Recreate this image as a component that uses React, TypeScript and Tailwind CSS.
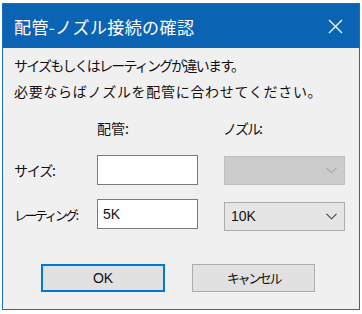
import React from "react";

const jp = "font-['Noto_Sans_CJK_JP','Noto_Sans',sans-serif]";

function Chevron({ muted }: { muted?: boolean }) {
  return (
    <svg width="11" height="7" viewBox="0 0 11 7" className="shrink-0">
      <path
        d="M0.5 0.8 L5.5 5.8 L10.5 0.8"
        fill="none"
        stroke={muted ? "#a6a6a6" : "#404040"}
        strokeWidth="1.1"
      />
    </svg>
  );
}

export default function App() {
  return (
    <div className={`h-[314px] w-[362px] bg-white pl-[2px] pt-[3px] ${jp}`}>
      <div className="flex h-[307px] w-[358px] flex-col border border-[#1a6cc0] bg-[#f0f0f0]">
        <div className="flex h-[44px] shrink-0 items-center justify-between bg-[#0b63b3] pl-[11px] pr-[16px]">
          <span className="text-[17px] leading-none tracking-[0.4px] text-white">
            配管-ノズル接続の確認
          </span>
          <svg width="15" height="15" viewBox="0 0 15 15">
            <path d="M1 1 L14 14 M14 1 L1 14" stroke="#ffffff" strokeWidth="1.3" />
          </svg>
        </div>

        <div className="flex flex-col pl-[11px] pt-[4px] text-[14px] text-[#111]">
          <p className="leading-[26px] tracking-[-1.8px]">サイズもしくはレーティングが違います。</p>
          <p className="leading-[26px] tracking-[0.7px]">必要ならばノズルを配管に合わせてください。</p>

          <div className="mt-[14px] flex h-[20px] items-center">
            <span className="ml-[83px] w-[126px] leading-[20px]">配管:</span>
            <span className="leading-[20px] tracking-[-2px]">ノズル:</span>
          </div>

          <div className="mt-[17px] flex items-center">
            <span className="w-[83px] tracking-[-1.2px]">サイズ:</span>
            <div className="h-[30px] w-[101px] border border-[#7a7a7a] bg-white" />
            <div className="ml-[26px] flex h-[29px] w-[121px] items-center justify-end border border-[#bfbfbf] bg-[#cccccc] pr-[7px]">
              <Chevron muted />
            </div>
          </div>

          <div className="mt-[14px] flex items-start">
            <span className="w-[83px] self-center text-[13px] tracking-[-2.6px]">レーティング:</span>
            <div className="flex h-[30px] w-[101px] items-center border border-[#7a7a7a] bg-white pl-[5px] font-['Liberation_Sans',sans-serif] text-[14px]">
              5K
            </div>
            <div className="ml-[26px] mt-[3px] flex h-[29px] w-[121px] items-center justify-between border border-[#adadad] bg-[#e5e5e5] pl-[6px] pr-[7px]">
              <span className="font-['Liberation_Sans',sans-serif] text-[14px]">10K</span>
              <Chevron />
            </div>
          </div>

          <div className="ml-[27px] mt-[33px] flex gap-[27px]">
            <button className="flex h-[28px] w-[124px] items-center justify-center border-2 border-[#0078d7] bg-[#e1e1e1] font-['Liberation_Sans',sans-serif] text-[14px]">
              OK
            </button>
            <button className="flex h-[28px] w-[123px] items-center justify-center border border-[#adadad] bg-[#e1e1e1] text-[13px] tracking-[-2.4px]">
              キャンセル
            </button>
          </div>
        </div>
      </div>
    </div>
  );
}
